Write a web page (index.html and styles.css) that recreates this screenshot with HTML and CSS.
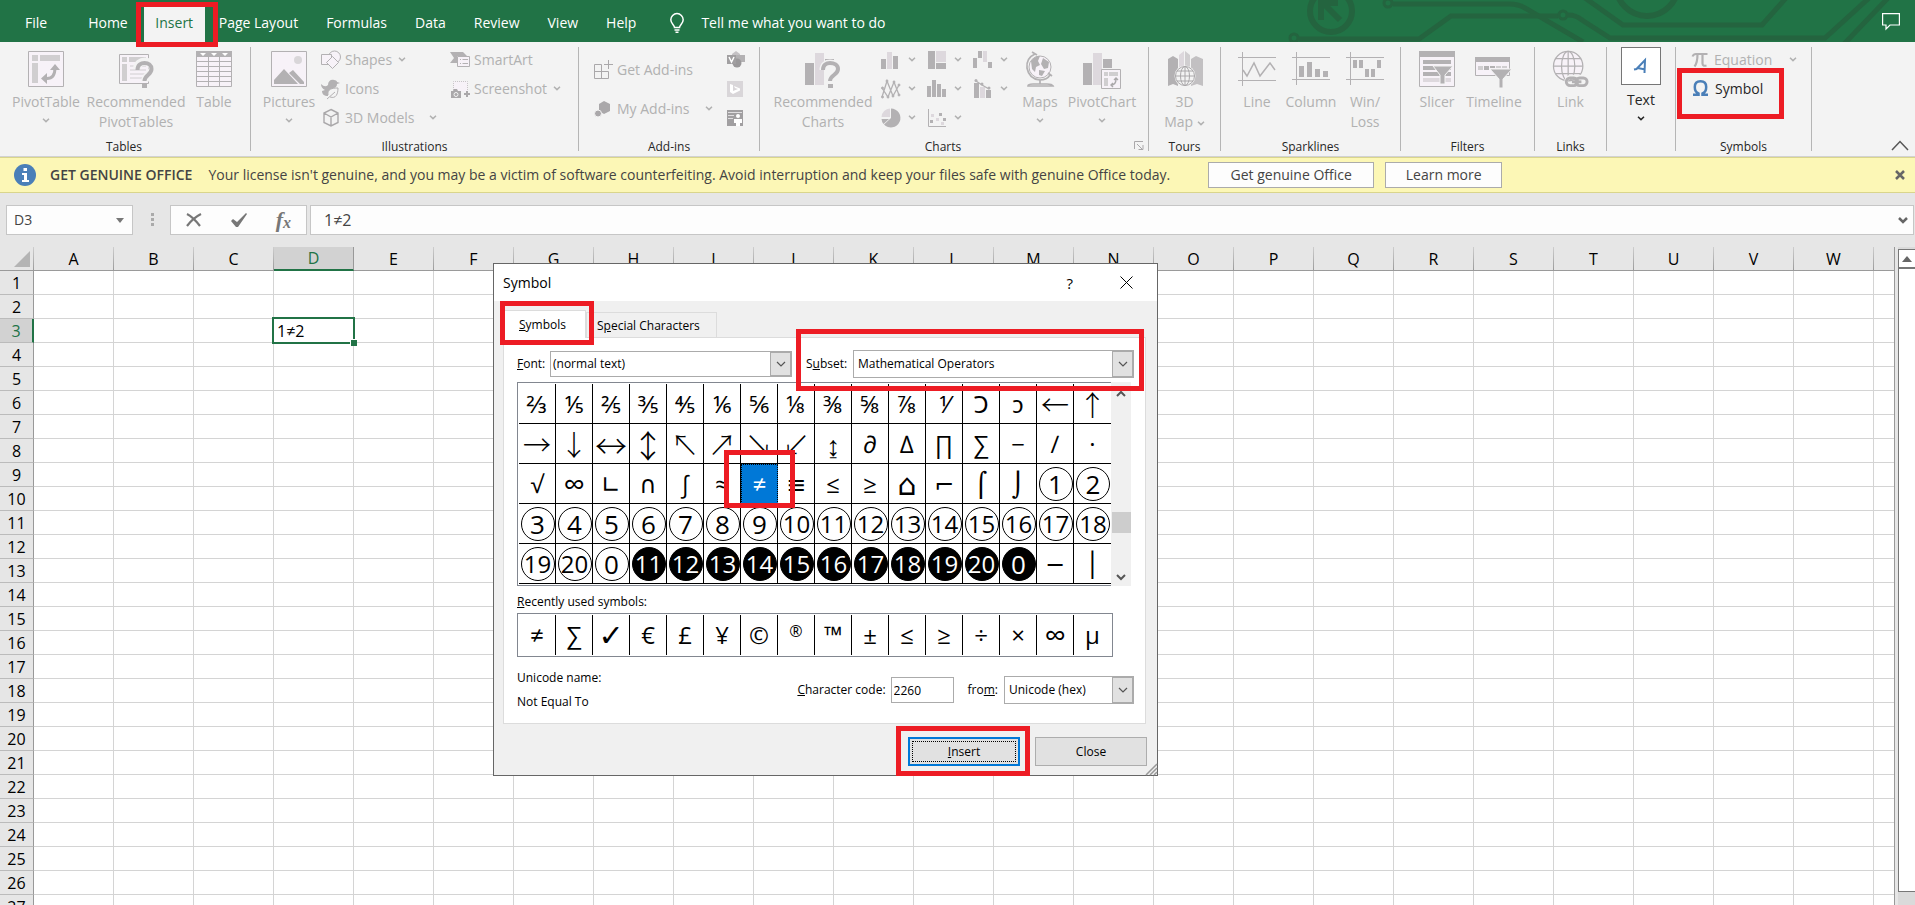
FILE: index.html
```html
<!DOCTYPE html>
<html lang="en">
<head>
<meta charset="utf-8">
<title>Excel – Symbol</title>
<link rel="stylesheet" href="styles.css">
</head>
<body>
<svg class="defs" aria-hidden="true">
  <symbol id="chev" viewBox="0 0 8 5"><path d="M1 .8 4 3.6 7 .8" fill="none" stroke="currentColor" stroke-width="1.5"/></symbol>
  <symbol id="drop" viewBox="0 0 10 6"><path d="M1 1 5 5 9 1" fill="none" stroke="#555" stroke-width="1.2"/></symbol>
</svg>

<header class="tabbar">
  <svg class="circuit" viewBox="1280 0 635 42" width="635" height="42" fill="none" stroke="#24643f" stroke-width="5" aria-hidden="true">
    <circle cx="1331" cy="11" r="21" stroke-width="6"/>
    <path d="M1340 20 1322 2M1321 20V3h17" stroke-width="6"/>
    <circle cx="1388" cy="3" r="4" stroke-width="3"/>
    <path d="M1393 4h117q8 0 15 4l58 34"/>
    <circle cx="1294" cy="38" r="4" stroke-width="3"/>
    <path d="M1299 39h120l32-23h107"/>
    <circle cx="1563" cy="15" r="4" stroke-width="3"/>
    <path d="M1568 15q8 0 14 5l28 18h215l44-40M1585-2l38 27h139l24-27M1888-2l-44 46"/>
    <circle cx="1647" cy="-15" r="31" stroke-width="6"/>
  </svg>
  <nav class="tabs">
    <button class="tab file">File</button>
    <button class="tab">Home</button>
    <span class="tabwrap"><button class="tab active">Insert</button><i class="mark mark-tab"></i></span>
    <button class="tab">Page Layout</button>
    <button class="tab">Formulas</button>
    <button class="tab">Data</button>
    <button class="tab">Review</button>
    <button class="tab">View</button>
    <button class="tab">Help</button>
    <button class="tab tell"><svg width="14" height="20" viewBox="0 0 14 20" fill="none" stroke="#fff" stroke-width="1.5"><path d="M4.500 14.500c0-2.500-3.700-4-3.700-7.700a6.200 6.200 0 0 1 12.400 0c0 3.700-3.700 5.200-3.700 7.700zM4.500 17h5M5.500 19.300h3"/></svg>Tell me what you want to do</button>
  </nav>
  <button class="comment" aria-label="Comments"><svg width="18" height="17" viewBox="0 0 18 17" fill="none" stroke="#fff" stroke-width="1.200"><path d="M.6.6h16.800v11.400H8L4 16v-4H.6z"/></svg></button>
</header>

<section class="ribbon">
  <div class="group g-tables">
    <div class="tools">
      <button class="big w76"><svg width="36" height="36" viewBox="0 0 36 36"><path d="M.5.5h35v35H.5z" fill="#f7f2f8" stroke="#b3b1b3"/><path d="M4 4h6v6H4zM12 4h20v6H12zM4 12h6v20H4z" fill="#d0ced0"/><path d="M15 27.500h4c6 0 8-4 8-11" fill="none" stroke="#b3b1b3" stroke-width="3"/><path d="m22 19 5-6 5 6zM19 22l-6 5.500 6 5.500z" fill="#b3b1b3"/></svg><span>PivotTable</span><svg class="chev"><use href="#chev"/></svg></button>
      <button class="big w104"><svg width="36" height="36" viewBox="0 0 36 36"><path d="M1.500 3.500h29v29h-29z" fill="#f7f2f8" stroke="#b3b1b3"/><path d="M4 6h5v5H4zM11 6h17v5H11zM4 13h5v17H4z" fill="#d0ced0"/><path d="M12 15h16M12 19h16M12 23h16M12 27h16" stroke="#d0ced0"/><path d="M19 18c0-5 4-7.500 8-7.500s7.500 2.500 7.500 7c0 6-7.500 6-7.500 13" fill="none" stroke="#f3f3f3" stroke-width="8"/><path d="M19.500 19c0-5 3.500-7 7-7 4 0 7 2 7 6 0 6-7 6-7 12" fill="none" stroke="#b3b1b3" stroke-width="4"/><path d="M24 33h5v4h-5z" fill="#b3b1b3"/></svg><span>Recommended<br>PivotTables</span></button>
      <button class="big w52"><svg width="36" height="36" viewBox="0 0 36 36"><path d="M.5.5h35v35H.5z" fill="#f7f2f8" stroke="#b3b1b3"/><path d="M0 0h36v6H0z" fill="#b3b1b3"/><path d="M4 2h6l-3 3zM15 2h6l-3 3zM26 2h6l-3 3z" fill="#fff"/><path d="M0 10.500h36M0 15.500h36M0 20.500h36M0 25.500h36M0 30.500h36M12.500 6v30M23.500 6v30" stroke="#b3b1b3"/></svg><span>Table</span></button>
    </div>
    <div class="gname">Tables</div>
  </div>
  <i class="sep"></i>
  <div class="group g-ill">
    <div class="tools">
      <button class="big w52"><svg width="36" height="36" viewBox="0 0 36 36"><path d="M.5.5h35v35H.5z" fill="#f7f2f8" stroke="#b3b1b3"/><circle cx="27" cy="9" r="4" fill="#d9d6d9"/><path d="M3 33v-4l10-11 14 15zM18 22l4-3 11 12v2h-4z" fill="#b3b1b3"/></svg><span>Pictures</span><svg class="chev"><use href="#chev"/></svg></button>
      <div class="stack s-shapes">
        <button class="small"><svg width="20" height="20" viewBox="0 0 20 20" fill="#f7f2f8" stroke="#b3b1b3"><circle cx="13.500" cy="7" r="6"/><path d="M.5 4.500h10v10H.5z"/><path d="m11.500 6.500 6 6-6 6-6-6z"/></svg><span>Shapes</span><svg class="chev"><use href="#chev"/></svg></button>
        <button class="small"><svg width="20" height="20" viewBox="0 0 20 20"><path d="M0 5q4 4 7 1c0-4 3-6 6-5 2 0 3 1 3 2l3 1-3 1q0 3-3 4c-5 1-6 5-6 8-4 0-6-2-6-5l3-1Q0 9 0 5z" fill="#b3b1b3"/><path d="M7 16c-1-6 4-7 10-7 0 6-2 11-8 9m-3 2 8-7" fill="#f3f3f3" stroke="#b3b1b3"/></svg><span>Icons</span></button>
        <button class="small"><svg width="20" height="20" viewBox="0 0 20 20" fill="none" stroke="#aaa8aa" stroke-width="1.400"><path d="m10 1.500 7 3.500v9.500l-7 3.500-7-3.500V5zM3 5l7 4 7-4M10 9v9"/></svg><span>3D Models</span><svg class="chev far"><use href="#chev"/></svg></button>
      </div>
      <div class="stack s-smart">
        <button class="small"><svg width="20" height="20" viewBox="0 0 20 20"><path d="M0 2h13l4 4H7v7H0l4-5z" fill="#b3b1b3"/><path d="M7.500 6.500h12v10h-12z" fill="#f7f2f8" stroke="#b3b1b3"/><path d="M10 9.500h1M12.500 9.500H18M10 13.500h1M12.500 13.500H18" stroke="#b3b1b3"/></svg><span>SmartArt</span></button>
        <button class="small"><svg width="20" height="20" viewBox="0 0 20 20"><path d="M3.500 11V2.500h14V13" fill="#f7f2f8" stroke="#c8c5c8" stroke-dasharray="1 1"/><path d="M1 12h2l1-2h3l1 2h3v7H1z" fill="#aaa8aa"/><circle cx="6" cy="15.500" r="2" fill="#aaa8aa" stroke="#f3f3f3"/><path d="M17 12v6M14 15h6" stroke="#aaa8aa" stroke-width="2"/></svg><span>Screenshot</span><svg class="chev"><use href="#chev"/></svg></button>
      </div>
    </div>
    <div class="gname">Illustrations</div>
  </div>
  <i class="sep"></i>
  <div class="group g-add">
    <div class="tools">
      <div class="stack s-add">
        <button class="small"><svg width="19" height="20" viewBox="0 0 19 20" fill="none" stroke="#aaa8aa"><path d="M7.500 4.500h-7v14h14v-7M.5 11.500h14M7.500 4.500v14M14.500 0v9M10 4.500h9"/></svg><span>Get Add-ins</span></button>
        <button class="small"><svg width="19" height="20" viewBox="0 0 19 20" fill="#aaa8aa"><path d="m10 2 6 3v7l-6 3-5-3V5z"/><circle cx="4" cy="14.500" r="3.500" stroke="#f3f3f3"/></svg><span>My Add-ins</span><svg class="chev far"><use href="#chev"/></svg></button>
      </div>
      <div class="stack s-ico">
        <button class="small" aria-label="Visio"><svg width="18" height="18" viewBox="0 0 18 18"><path d="M9 0 13 3v5H5V3z" fill="#c4c1c4"/><path d="M9 4h9v7H9z" fill="#b3b1b3"/><circle cx="10" cy="12" r="4.500" fill="#9a989a"/><path d="M0 4h9v9H0z" fill="#a19fa1"/><path d="m2 6 2.500 5L7 6" fill="none" stroke="#fff" stroke-width="1.500"/></svg></button>
        <button class="small" aria-label="Bing Maps"><svg width="16" height="16" viewBox="0 0 16 16"><path d="M0 0h16v16H0z" fill="#d9d6d9"/><path d="M3 3 6 4v6l5-2-3-1-1-2 6 2.500v2L6 13l-3-2z" fill="#fff"/></svg></button>
        <button class="small" aria-label="People Graph"><svg width="16" height="16" viewBox="0 0 16 16"><path d="M0 0h16v16H0z" fill="#a19fa1"/><path d="M1 2h14v1H1zM1 5h6v1H1zM1 8h5v1H1z" fill="#e0dee0"/><circle cx="11" cy="6" r="2" fill="#fff"/><path d="M7 9h8v4h-2v3H9v-3H7z" fill="#fff"/></svg></button>
      </div>
    </div>
    <div class="gname">Add-ins</div>
  </div>
  <i class="sep"></i>
  <div class="group g-charts">
    <div class="tools">
      <button class="big w104"><svg width="36" height="36" viewBox="0 0 36 36"><path d="M0 12h9v22H0zM20 8h9v6h-9z" fill="#b3b1b3"/><path d="M10 2h9v32h-9z" fill="#ddd8dd"/><path d="M18 19c0-5 3.500-7 7-7 4 0 7 2 7 6 0 6-7 6-7 12" fill="none" stroke="#f3f3f3" stroke-width="7"/><path d="M18 19c0-5 3.500-7 7-7 4 0 8 2 8 6 0 6-8 6-8 12" fill="none" stroke="#b3b1b3" stroke-width="4"/><path d="M23 33h5v4h-5z" fill="#b3b1b3"/></svg><span>Recommended<br>Charts</span></button>
      <div class="chartgrid">
      <div class="stack s-chart">
        <button class="small" aria-label="Column chart"><svg width="20" height="20" viewBox="0 0 20 20"><path d="M0 9h5v10H0zM12 6h5v13h-5z" fill="#b3b1b3"/><path d="M6 2h5v17H6z" fill="#ddd8dd"/></svg><svg class="chev"><use href="#chev"/></svg></button>
        <button class="small" aria-label="Line chart"><svg width="20" height="20" viewBox="0 0 20 20" fill="none" stroke="#b3b1b3"><path d="m1 18 5-16 6 15 6-11M1 9l6 9 6-15 5 13" stroke-width="1.300"/><g fill="#b3b1b3"><circle cx="1.500" cy="18" r="1"/><circle cx="6" cy="2" r="1"/><circle cx="12" cy="17" r="1"/><circle cx="18" cy="6" r="1"/><circle cx="1.500" cy="9" r="1"/><circle cx="7" cy="18" r="1"/><circle cx="13" cy="3" r="1"/><circle cx="18" cy="16" r="1"/></g></svg><svg class="chev"><use href="#chev"/></svg></button>
        <button class="small" aria-label="Pie chart"><svg width="20" height="20" viewBox="0 0 20 20"><path d="M10 .5a9.500 9.500 0 1 1-7 16L10 10z" fill="#b3b1b3"/><path d="M9 .5V9H.5A9 9 0 0 1 9 .5z" fill="#ddd8dd"/><path d="M.5 11H8l-5.500 5A9 9 0 0 1 .5 11z" fill="#b3b1b3"/></svg><svg class="chev"><use href="#chev"/></svg></button>
      </div>
      <div class="stack s-chart">
        <button class="small" aria-label="Hierarchy chart"><svg width="20" height="20" viewBox="0 0 20 20"><path d="M1 1h7v18H1zM9 13h10v6H9z" fill="#b3b1b3"/><path d="M9 1h10v11H9z" fill="#ddd8dd"/></svg><svg class="chev"><use href="#chev"/></svg></button>
        <button class="small" aria-label="Statistic chart"><svg width="20" height="20" viewBox="0 0 20 20"><path d="M0 7h4v11H0zM5 1h4v17H5zM10 5h4v13h-4zM15 10h4v8h-4z" fill="#b3b1b3"/></svg><svg class="chev"><use href="#chev"/></svg></button>
        <button class="small" aria-label="Scatter chart"><svg width="20" height="20" viewBox="0 0 20 20"><path d="M1.500 1v17.500H19" fill="none" stroke="#b3b1b3"/><path d="M3 12h3v3H3zM12 5h3v3h-3zM16 10h3v3h-3z" fill="#b3b1b3"/><path d="M4 6h3v3H4zM9 10h3v3H9zM14 14h3v3h-3z" fill="#ddd8dd"/></svg><svg class="chev"><use href="#chev"/></svg></button>
      </div>
      <div class="stack s-chart">
        <button class="small" aria-label="Waterfall chart"><svg width="20" height="20" viewBox="0 0 20 20"><path d="M0 8h4v10H0zM5 1h4v7H5zM15 12h4v6h-4z" fill="#b3b1b3"/><path d="M10 1h4v11h-4z" fill="#ddd8dd"/></svg><svg class="chev"><use href="#chev"/></svg></button>
        <button class="small" aria-label="Combo chart"><svg width="20" height="20" viewBox="0 0 20 20"><path d="M1 4h5v15H1zM13 11h5v8h-5z" fill="#b3b1b3"/><path d="M7 8h5v11H7z" fill="#ddd8dd"/><path d="m3 2 6 4 7 4" fill="none" stroke="#b3b1b3" stroke-width="1.300"/><circle cx="3" cy="1.500" r="1.500" fill="#b3b1b3"/><circle cx="9" cy="5" r="1.500" fill="#b3b1b3"/><circle cx="16" cy="9" r="1.500" fill="#b3b1b3"/></svg><svg class="chev"><use href="#chev"/></svg></button>
      </div>
      </div>
      <button class="big w52"><svg width="36" height="36" viewBox="0 0 36 36"><circle cx="18" cy="16" r="11" fill="#f7f2f8" stroke="#b3b1b3"/><path d="M9 10q4-5 9-5l-2 5 2 4-4 2-1 5-3-3zM21 7l6 4-1 6-4 1-3-5zM17 19l6 1-3 5-3-1z" fill="#b3b1b3"/><path d="M13 3Q4 7 5 17q2 11 13 12 7 0 10-5M10 1l5 3M26 22l4 3M18 29v4M6 35q0-2 5-2h14q5 0 6 2z" fill="none" stroke="#b3b1b3" stroke-width="1.700"/></svg><span>Maps</span><svg class="chev"><use href="#chev"/></svg></button>
      <button class="big w72"><svg width="38" height="36" viewBox="0 0 38 36"><path d="M0 12h9v22H0zM20 8h9v9h-9z" fill="#b3b1b3"/><path d="M10 2h9v32h-9z" fill="#ddd8dd"/><path d="M18.500 18.500h19v19h-19z" fill="#f7f2f8" stroke="#b3b1b3"/><path d="M21 21h4v4h-4zM26 21h9v4h-9zM21 27h4v8h-4z" fill="#d0ced0"/><path d="M28 34q5 0 5-6m-2 1 2-2 2 2m-5 3-2 2 2 2" fill="none" stroke="#aaa8aa" stroke-width="1.400"/></svg><span>PivotChart</span><svg class="chev"><use href="#chev"/></svg></button>
    </div>
    <div class="gname">Charts</div>
    <button class="launch" aria-label="Charts options"><svg width="10" height="9" viewBox="0 0 10 9" fill="none" stroke="#aaa8aa"><path d="M.5 8V.5H9M3 3l5 5M9 4v4.500H4.500"/></svg></button>
  </div>
  <i class="sep"></i>
  <div class="group g-tour">
    <div class="tools">
      <button class="big w52"><svg width="36" height="36" viewBox="0 0 36 36"><path d="m1 8 5-3 5 3v27l-5-2-5 2z" fill="#b3b1b3"/><path d="m12 4 5-4v32H12z" fill="#ddd8dd"/><path d="m18 0 5 4v28h-5z" fill="#d0ced0"/><path d="m24 8 5-3 7 3v27l-6-2-6 2z" fill="#c2c0c2"/><circle cx="18" cy="25" r="10.500" fill="#f3f3f3"/><g fill="none" stroke="#aaa8aa"><circle cx="18" cy="25" r="9.500"/><ellipse cx="18" cy="25" rx="4.500" ry="9.500"/><path d="M8 25h20M10 20h16M10 30h16M18 15v20"/></g></svg><span>3D<br>Map <svg class="chev"><use href="#chev"/></svg></span></button>
    </div>
    <div class="gname">Tours</div>
  </div>
  <i class="sep"></i>
  <div class="group g-spark">
    <div class="tools">
      <button class="big w54"><svg width="38" height="36" viewBox="0 0 38 36" fill="none" stroke="#b3b1b3"><path d="M0 6.500h38M0 29.500h38M4.500 1v34"/><path d="m5 19 4 6 7-13 6 13 10-13 5 7" stroke-width="1.500"/></svg><span>Line</span></button>
      <button class="big w54"><svg width="38" height="36" viewBox="0 0 38 36" fill="none" stroke="#b3b1b3"><path d="M0 6.500h38M0 28.500h38M4.500 1v33"/><path d="M7 15h5v11H7zM15 11h5v15h-5zM23 18h5v8h-5zM31 20h5v6h-5z" fill="#b3b1b3" stroke="none"/></svg><span>Column</span></button>
      <button class="big w54"><svg width="38" height="36" viewBox="0 0 38 36" fill="none" stroke="#b3b1b3"><path d="M0 6.500h38M0 28.500h38M4.500 1v33"/><path d="M7 9h4v8H7zM13 9h4v8h-4zM19 18h4v8h-4zM25 18h4v8h-4zM31 9h4v8h-4z" fill="#b3b1b3" stroke="none"/></svg><span>Win/<br>Loss</span></button>
    </div>
    <div class="gname">Sparklines</div>
  </div>
  <i class="sep"></i>
  <div class="group g-filt">
    <div class="tools">
      <button class="big w52"><svg width="36" height="36" viewBox="0 0 36 36"><path d="M.5.5h35v35H.5z" fill="#f7f2f8" stroke="#b3b1b3"/><path d="M0 0h36v6H0zM4 9h28v4H4zM4 15h28v4H4zM4 21h28v4H4z" fill="#b3b1b3"/><path d="M4 27h28v4H4z" fill="#ddd8dd"/><path d="M14 15h20l-8 9v9h-5v-9z" fill="#b3b1b3" stroke="#f3f3f3"/></svg><span>Slicer</span></button>
      <button class="big w62"><svg width="38" height="36" viewBox="0 0 38 36"><path d="M.5 6.500h34v18H.5z" fill="#f7f2f8" stroke="#b3b1b3"/><path d="M0 6h35v5H0z" fill="#b3b1b3"/><path d="M3 15h5v4H3z" fill="#d0ced0"/><path d="M9 15h5v4H9zM15 15h5v2h-5z" fill="#b3b1b3"/><path d="M21 15h5v2h-5zM27 15h5v2h-5z" fill="#d0ced0"/><path d="M15 18h22l-9 10v9h-4v-9z" fill="#b3b1b3" stroke="#f3f3f3"/></svg><span>Timeline</span></button>
    </div>
    <div class="gname">Filters</div>
  </div>
  <i class="sep"></i>
  <div class="group g-link">
    <div class="tools">
      <button class="big w52"><svg width="38" height="38" viewBox="0 0 38 38" fill="none" stroke="#b3b1b3" stroke-width="1.300"><circle cx="16" cy="16" r="15.500" fill="#f7f2f8"/><ellipse cx="16" cy="16" rx="7" ry="15.500"/><path d="M.5 16h31M3 8h26M3 24h26M16 .5v31"/><rect x="14" y="27" width="22" height="10" rx="5" stroke="#f3f3f3" stroke-width="4"/><rect x="14" y="28.500" width="12" height="8" rx="4" stroke-width="3"/><rect x="24" y="28.500" width="12" height="8" rx="4" stroke-width="3"/><path d="M20 32.500h10" stroke-width="3"/></svg><span>Link</span></button>
    </div>
    <div class="gname">Links</div>
  </div>
  <i class="sep"></i>
  <div class="group g-text">
    <div class="tools">
      <button class="big textbtn"><i class="abox"><svg width="16" height="18" viewBox="0 0 16 18" fill="none" stroke="#4a7fb8" stroke-width="2"><path d="m1 12.500 2.500-.5L12 3l-.5 13M4.500 11l8 1.500"/></svg></i><span>Text</span><svg class="chev"><use href="#chev"/></svg></button>
    </div>
  </div>
  <i class="sep"></i>
  <div class="group g-sym">
    <div class="tools">
      <div class="stack s-sym">
        <button class="small"><svg width="16" height="16" viewBox="0 0 16 16" fill="none" stroke="#b3b1b3"><path d="M.5 4.500Q1.500 2 4 2h11.500" stroke-width="2"/><path d="M5.500 2q0 9-3 12.500M10.500 2v9.500q0 3 4 2" stroke-width="2.200"/></svg><span>Equation</span><svg class="chev far"><use href="#chev"/></svg></button>
        <span class="symwrap"><button class="small on"><svg width="17" height="17" viewBox="0 0 17 17" fill="none" stroke="#4a7fb8"><path d="M1 14.800h5.500v-1.300C4 12.500 2.800 10 2.800 7c0-3.500 2.200-5.700 5.700-5.700s5.700 2.200 5.700 5.700c0 3-1.200 5.500-3.700 6.500v1.300H16" stroke-width="2.500"/></svg><span>Symbol</span></button><i class="mark mark-sym"></i></span>
      </div>
    </div>
    <div class="gname">Symbols</div>
  </div>
  <i class="sep"></i>
  <button class="collapse" aria-label="Collapse the ribbon"><svg width="18" height="11" viewBox="0 0 18 11" fill="none" stroke="#555" stroke-width="1.500"><path d="m1 10 8-8.500 8 8.500"/></svg></button>
</section>

<section class="notice">
  <svg width="22" height="22" viewBox="0 0 22 22"><circle cx="11" cy="11" r="11" fill="#4a7fb8"/><path d="M9.500 4h3.500v3H9.500zM8 9h5v7h2v2H8v-2h2v-5H8z" fill="#fff"/></svg>
  <strong>GET GENUINE OFFICE</strong>
  <span class="msg">Your license isn't genuine, and you may be a victim of software counterfeiting. Avoid interruption and keep your files safe with genuine Office today.</span>
  <button class="nbtn get">Get genuine Office</button>
  <button class="nbtn">Learn more</button>
  <button class="nclose" aria-label="Close message"><svg width="10" height="10" viewBox="0 0 10 10" stroke="#666" stroke-width="2.500"><path d="m1 1 8 8M9 1 1 9"/></svg></button>
</section>

<section class="formula">
  <div class="namebox"><input aria-label="Name box" value="D3"><svg width="8" height="5" viewBox="0 0 8 5"><path d="M0 0h8L4 5z" fill="#777"/></svg></div>
  <svg class="dots" width="4" height="14" viewBox="0 0 4 14" fill="#aaa"><path d="M0 0h3v3H0zM0 5h3v3H0zM0 10h3v3H0z"/></svg>
  <div class="fbtns">
    <button aria-label="Cancel"><svg width="16" height="14" viewBox="0 0 16 14" stroke="#777" stroke-width="2.200" fill="none"><path d="M1 1q6 3 13 12M15 1Q7 5 1 13"/></svg></button>
    <button aria-label="Enter"><svg width="18" height="14" viewBox="0 0 18 14"><path d="m1 8 2-2 4 3 9-9 1 1L8 14H6z" fill="#777"/></svg></button>
    <button class="fx" aria-label="Insert function"><i>f</i><i class="x">x</i></button>
  </div>
  <div class="fbox"><input aria-label="Formula bar" value="1≠2"><svg width="10" height="7" viewBox="0 0 10 7"><path d="m1 1 4 4 4-4" fill="none" stroke="#666" stroke-width="2.500"/></svg></div>
</section>

<main class="work">
  <div class="sheetwrap"><table class="sheet" id="sheet"></table></div>
  <div class="vscroll">
    <button aria-label="Scroll up"><svg width="10" height="6" viewBox="0 0 10 6"><path d="m0 6 5-6 5 6z" fill="#666"/></svg></button>
    <div class="vthumb"></div>
  </div>
</main>

<section class="dialog" role="dialog" aria-labelledby="dtitle">
  <div class="dtitle"><h1 id="dtitle">Symbol</h1><button class="help">?</button><button aria-label="Close"><svg width="13" height="13" viewBox="0 0 13 13" stroke="#000"><path d="m.5.5 12 12M12.500.5l-12 12"/></svg></button></div>
  <div class="dbody">
    <div class="dtabs" role="tablist">
      <button role="tab" aria-selected="true" class="dtab cur"><span><u>S</u>ymbols</span></button>
      <button role="tab" class="dtab"><span>S<u>p</u>ecial Characters</span></button>
      <i class="mark mark-dtab"></i>
    </div>
    <div class="panel">
      <div class="frow">
        <label for="font"><u>F</u>ont:</label>
        <div class="combo c-font"><select id="font"><option>(normal text)</option></select><i><svg width="10" height="6"><use href="#drop"/></svg></i></div>
        <label for="subset" class="l-sub">S<u>u</u>bset:</label>
        <div class="combo c-sub"><select id="subset"><option>Mathematical Operators</option></select><i><svg width="10" height="6"><use href="#drop"/></svg></i></div>
        <b class="mark mark-sub"></b>
      </div>
      <div class="symarea">
        <div class="symgrid" id="symbols"></div>
        <div class="sscroll"><svg width="10" height="7" viewBox="0 0 10 7" fill="none" stroke="#555" stroke-width="2"><path d="m1 6 4-4 4 4"/></svg><i></i><svg width="10" height="7" viewBox="0 0 10 7" fill="none" stroke="#555" stroke-width="2"><path d="m1 1 4 4 4-4"/></svg></div>
      </div>
      <p class="rlabel"><u>R</u>ecently used symbols:</p>
      <div class="recent" id="recent"></div>
      <div class="urow">
        <p>Unicode name:<br>Not Equal To</p>
        <div class="code">
          <label for="code"><u>C</u>haracter code:</label><input id="code" value="2260">
          <label for="from" class="l-from">fro<u>m</u>:</label>
          <div class="combo c-from"><select id="from"><option>Unicode (hex)</option></select><i><svg width="10" height="6"><use href="#drop"/></svg></i></div>
        </div>
      </div>
    </div>
    <div class="dbtns">
      <span class="inswrap"><button class="dbtn primary"><span><u>I</u>nsert</span></button><i class="mark mark-ins"></i></span>
      <button class="dbtn">Close</button>
    </div>
  </div>
  <svg class="grip" width="11" height="11" viewBox="0 0 11 11" stroke="#999" stroke-width="1.500"><path d="M0 11 11 0M4 11l7-7M8 11l3-3"/></svg>
</section>
<script src="script.js"></script>
</body>
</html>
```
FILE: script.js
```js
const sheet = document.getElementById('sheet');
const letters = 'ABCDEFGHIJKLMNOPQRSTUVW'.split('');
let html = '<colgroup><col class="rowcol">' + letters.map(() => '<col class="datacol">').join('') + '<col></colgroup>';
html += '<thead><tr><th class="corner"><svg width="16" height="16" viewBox="0 0 16 16"><path d="M16 0v16H0z" fill="#b4b4b4"/></svg></th>';
html += letters.map(l => `<th${l === 'D' ? ' class="sel"' : ''}>${l}</th>`).join('') + '<th class="end"></th></tr></thead><tbody>';
for (let r = 1; r <= 27; r++) {
  html += `<tr><th${r === 3 ? ' class="sel"' : ''}>${r}</th>`;
  for (const l of letters) {
    html += r === 3 && l === 'D' ? '<td class="cell">1≠2<i class="cursor"></i></td>' : '<td></td>';
  }
  html += '<td class="end"></td></tr>';
}
sheet.innerHTML = html + '</tbody>';

const rows = [
  '⅔⅕⅖⅗⅘⅙⅚⅛⅜⅝⅞⅟Ↄↄ←↑',
  '→↓↔↕↖↗↘↙↨∂∆∏∑−∕·',
  '√∞∟∩∫≈≠≡≤≥⌂⌐⌠⌡①②',
  '③④⑤⑥⑦⑧⑨⑩⑪⑫⑬⑭⑮⑯⑰⑱',
  '⑲⑳⓪⓫⓬⓭⓮⓯⓰⓱⓲⓳⓴⓿─│'
];
const ringed = c => {
  const p = c.codePointAt(0);
  if (p >= 0x2460 && p <= 0x2473) return ['ring', p - 0x2460 + 1];
  if (p === 0x24ea) return ['ring', 0];
  if (p >= 0x24eb && p <= 0x24f4) return ['ring solid', p - 0x24eb + 11];
  if (p === 0x24ff) return ['ring solid', 0];
  return null;
};
const kind = c => {
  if ('↔↕'.includes(c)) return ' arrow long';
  if ('←↑→↓↖↗↘↙↨'.includes(c)) return ' arrow';
  if ('∞⌂✓'.includes(c)) return ' large';
  return c === '®' ? ' reg' : '';
};
document.getElementById('symbols').innerHTML = rows.flatMap(r => [...r]).map(c => {
  const n = ringed(c);
  if (n) return `<button class="sym" title="${c}"><span class="${n[0]}${n[1] > 9 ? ' two' : ''}">${n[1]}</span></button>`;
  if (c === '≠') return '<span class="picked"><button class="sym chosen">≠</button><i class="mark mark-ne"></i></span>';
  return `<button class="sym${kind(c)}">${c}</button>`;
}).join('');
document.getElementById('recent').innerHTML = [...'≠∑✓€£¥©®™±≤≥÷×∞µ'].map(c => `<button class="sym${kind(c)}">${c}</button>`).join('');
```
FILE: styles.css
```css
* { box-sizing: border-box; }
body { margin: 0; height: 100vh; display: flex; flex-direction: column; overflow: hidden; position: relative; background: #e6e6e6; color: #262626; font: 14px/20px "Open Sans", "Noto Sans", "DejaVu Sans", sans-serif; }
button, input, select { font: inherit; color: inherit; border: 0; background: none; padding: 0; margin: 0; border-radius: 0; outline: 0; }
svg { display: block; flex: none; overflow: visible; }
.defs { position: absolute; width: 0; height: 0; }
.mark { position: absolute; border: 5px solid #ed1c24; pointer-events: none; z-index: 3; }

.tabbar { position: relative; z-index: 2; display: flex; height: 42px; background: #217346; color: #fff; flex: none; justify-content: space-between; }
.circuit { position: absolute; right: 0; top: 0; clip-path: inset(0); }
.tabs { display: flex; padding-top: 7px; }
.tab { height: 35px; padding: 0 14px 3px; white-space: nowrap; }
.file { padding: 0 27px 3px 25px; }
.tabwrap { position: relative; margin-left: 2px; }
.active { background: #f3f3f3; color: #217346; width: 61px; padding: 0 0 3px; }
.mark-tab { left: -8px; right: -13px; top: -5px; bottom: -5px; }
.tell { display: flex; align-items: center; gap: 17px; margin-left: 6px; }
.comment { position: relative; padding: 0 15px 0 0; display: flex; align-items: center; }

.ribbon { display: flex; flex: none; height: 115px; padding-top: 4px; background: #f3f3f3; border-bottom: 1px solid #d2d2d2; color: #b1b1b1; position: relative; }
.sep { width: 1px; height: 104px; margin-top: 1px; background: #b5b5b5; flex: none; }
.group { display: flex; flex-direction: column; position: relative; flex: none; }
.tools { display: flex; height: 90px; flex: none; }
.gname { color: #262626; font-size: 12px; text-align: center; line-height: 20px; padding-top: 1px; flex: none; }
.g-tables { width: 250px; padding-left: 8px; } .g-tables .gname { padding-right: 10px; }
.g-ill { width: 327px; } .g-ill .tools { padding-left: 12px; }
.g-add { width: 180px; } .g-add .tools { padding-left: 15px; }
.g-charts { width: 388px; } .g-charts .tools { padding-left: 11px; } .g-charts .gname { padding-right: 22px; }
.g-tour { width: 71px; } .g-tour .tools { justify-content: center; }
.g-spark { width: 179px; } .g-spark .tools { padding-left: 9px; }
.g-filt { width: 133px; } .g-filt .tools { padding-left: 10px; }
.g-link { width: 71px; } .g-link .tools { justify-content: center; }
.g-text { width: 68px; } .g-text .tools { justify-content: center; }
.g-sym { width: 135px; } .g-sym .tools { padding-left: 16px; }
.big { display: flex; flex-direction: column; align-items: center; padding-top: 5px; white-space: nowrap; flex: none; }
.big > span { margin-top: 5px; }
.big > svg:first-child { height: 36px; }
.w52 { width: 52px; } .w54 { width: 54px; } .w62 { width: 62px; } .w72 { width: 72px; } .w76 { width: 76px; } .w104 { width: 104px; }
.chev { width: 8px; height: 5px; }
.big > .chev { margin-top: 6px; }
.big span .chev { display: inline-block; vertical-align: middle; }
.stack { display: flex; flex-direction: column; flex: none; }
.small { display: flex; align-items: center; gap: 4px; height: 29px; padding-bottom: 2px; white-space: nowrap; }
.small .chev { margin-left: 2px; }
.small .far { margin-left: 11px; }
.s-shapes { width: 135px; padding-left: 6px; }
.s-add { width: 133px; padding-top: 10px; gap: 10px; }
.chartgrid { display: flex; padding-left: 6px; margin-right: -5px; }
.s-chart { width: 46px; }
.s-chart .small { gap: 5px; }
.s-sym .small { gap: 6px; }
.s-sym { width: 110px; }
.symwrap { position: relative; }
.on { color: #262626; }
.mark-sym { left: -15px; top: -7px; width: 107px; height: 51px; }
.launch { position: absolute; right: 4px; bottom: 6px; }
.textbtn { color: #262626; padding-top: 1px; }
.abox { display: grid; place-items: center; width: 40px; height: 38px; background: #fff; border: 1px solid #767676; }
.collapse { margin: auto 6px 5px auto; }

.notice { display: flex; flex: none; align-items: center; height: 36px; padding: 0 10px 0 14px; background: #fcf7b6; border: solid #d9d58c; border-width: 1px 0; color: #444; white-space: nowrap; }
.notice strong { margin: 0 16px 0 14px; font-weight: 600; }
.nbtn { height: 26px; border: 1px solid #ababab; background: #fdfdfd; width: 117px; }
.nbtn.get { width: 166px; margin: 0 11px 0 38px; }
.nclose { margin-left: auto; }

.formula { display: flex; flex: none; height: 54px; padding: 12px 1px 12px 6px; color: #444; }
.namebox, .fbtns, .fbox { display: flex; align-items: center; background: #fdfdfd; border: 1px solid #c6c6c6; }
.namebox { width: 127px; padding: 0 8px 0 7px; }
.formula input { flex: 1; min-width: 0; }
.dots { margin: 8px 15px 0 18px; }
.fbtns { width: 137px; justify-content: space-between; padding: 0 15px; margin-right: 3px; }
.fx { font: italic bold 22px/24px "Liberation Serif", serif; color: #777; display: flex; align-items: center; }
.fx .x { font-size: 16px; padding-top: 6px; }
.fbox { flex: 1; padding: 0 5px 0 13px; }
.fbox input { font-size: 16px; }

.work { flex: 1; min-height: 0; display: flex; gap: 3px; }
.sheetwrap { flex: 1; min-width: 0; overflow: hidden; border-right: 1px solid #999; }
.sheet { width: 100%; table-layout: fixed; border-collapse: separate; border-spacing: 0; background: #fff; color: #000; font-size: 16px; }
.rowcol { width: 34px; } .datacol { width: 80px; }
.sheet th { height: 24px; padding: 0; font-weight: 400; line-height: 22px; background: #e6e6e6; }
.sheet thead th { border-bottom: 1px solid #999; border-right: 1px solid; border-image: linear-gradient(#d0d0d0, #999) 1; }
.sheet thead th.end { border-right: 0; }
.sheet thead .sel { background: #d2d2d2; color: #217346; border-image: none; border-color: #999; border-bottom: 2px solid #217346; line-height: 21px; }
.corner svg { margin-left: 14px; }
.sheet tbody th { border-right: 1px solid #999; border-bottom: 1px solid #bbb; }
.sheet tbody .sel { background: #d2d2d2; color: #217346; border-right: 2px solid #217346; }
.sheet td { height: 24px; padding: 0; border: solid #d4d4d4; border-width: 0 1px 1px 0; line-height: 22px; }
.sheet td.end { border-right: 0; }
.sheet .cell { position: relative; padding: 1px 0 0 3px; }
.cursor { position: absolute; inset: -2px -2px -2px -2px; border: 2px solid #217346; }
.cursor::after { content: ""; position: absolute; right: -4px; bottom: -4px; width: 6px; height: 6px; background: #217346; border: solid #fff; border-width: 1px 0 0 1px; }
.vscroll { width: 17px; padding-top: 2px; display: flex; flex-direction: column; background: #dadada; }
.vscroll button { height: 19px; border: solid #777; border-width: 1px 0 1px 1px; background: #fff; display: grid; place-items: center; flex: none; }
.vthumb { flex: 1; margin-bottom: 13px; border: solid #777; border-width: 1px 0 1px 1px; background: #fff; }

.dialog { position: absolute; left: 493px; top: 263px; width: 665px; border: 1px solid #666; background: #f0f0f0; color: #000; font-size: 12px; z-index: 2; }
.dtitle { display: flex; align-items: center; height: 37px; padding: 0 24px 0 9px; background: #fff; }
.dtitle h1 { margin: 0 auto 0 0; font-size: 14px; font-weight: 400; }
.help { font-size: 15px; margin-right: 47px; }
.dbody { padding: 9px 10px 9px 9px; }
.dtabs { display: flex; align-items: flex-end; height: 27px; position: relative; }
.dtab { height: 25px; width: 131px; border: 1px solid #dcdcdc; border-bottom: 0; white-space: nowrap; text-align: left; padding: 2px 0 0 10px; }
.dtab.cur { height: 28px; width: 83px; background: #fff; position: relative; margin-bottom: -1px; padding: 0 0 0 15px; }
.mark-dtab { left: -3px; top: -9px; width: 94px; height: 44px; }
.panel { border: 1px solid #dcdcdc; background: #fff; padding: 12px 11px 9px 13px; margin-right: 1px; }
.frow { display: flex; align-items: center; height: 28px; position: relative; margin-bottom: 4px; }
.frow label { width: 33px; flex: none; }
.frow .l-sub { width: 47px; margin-left: 14px; }
.combo { display: flex; height: 28px; border: 1px solid #ababab; background: #fff; }
.combo select { flex: 1; min-width: 0; appearance: none; padding: 0 4px; }
.combo i { width: 21px; border: 1px solid #ababab; background: #e1e1e1; display: grid; place-items: center; flex: none; }
.c-font { width: 242px; height: 26px; } .c-font select { padding: 0 2px; }
.c-sub { flex: 1; } .c-from { width: 130px; }
.mark-sub { left: 279px; right: -10px; top: -21px; height: 62px; }
.symarea { display: flex; height: 204px; }
.symgrid { display: grid; grid-template-columns: repeat(16, 37px); grid-auto-rows: 40px; border: solid #828790; border-width: 1px 0 1px 1px; padding: 1px 0 1px 1px; }
.sym { width: 100%; height: 100%; display: grid; place-content: center; overflow: hidden; min-width: 0; border-right: 1px solid #000; border-bottom: 1px solid #000; font-size: 24px; line-height: 30px; color: #000; }
.arrow { font-family: "Noto Sans CJK JP", sans-serif; font-size: 28px; font-weight: 300; }
.long { font-size: 32px; }
.large { font-size: 30px; }
.reg { font-size: 16px; padding-bottom: 8px; }
.symgrid > :nth-child(16n), .recent > :last-child { border-right: 0; }
.ring { display: block; width: 34px; height: 34px; margin-left: 1px; border: 1px solid #000; border-radius: 50%; font-size: 26px; line-height: 32px; text-align: center; }
.two { font-size: 24px; }
.solid { background: #000; color: #fff; }
.picked { position: relative; display: block; }
.chosen { background: #0078d7; color: #fff; border: 1px dotted #000; }
.mark-ne { left: -17px; top: -14px; width: 71px; height: 58px; }
.sscroll { width: 20px; background: #f0f0f0; display: flex; flex-direction: column; align-items: center; padding: 8px 0 5px; justify-content: space-between; }
.sscroll i { width: 19px; height: 21px; background: #cdcdcd; margin-top: 74px; }
.rlabel { margin: 6px 0 1px; line-height: 20px; }
.recent { display: grid; grid-template-columns: repeat(16, 37px); width: 596px; height: 44px; border: 1px solid #828790; padding: 1px; }
.recent .sym { border-bottom: 0; }
.urow { display: flex; justify-content: space-between; align-items: center; margin-top: 9px; }
.urow p { margin: 0; line-height: 24px; }
.code { display: flex; align-items: center; }
.code input { width: 63px; height: 26px; border: 1px solid #ababab; margin: 0 14px 0 5px; padding: 0 2px; }
.l-from { margin-right: 6px; }
.dbtns { display: flex; justify-content: flex-end; gap: 15px; margin-top: 13px; }
.dbtn { width: 112px; height: 29px; background: #e1e1e1; border: 1px solid #adadad; }
.inswrap { position: relative; }
.primary { border: 2px solid #0078d7; padding: 2px; display: grid; }
.primary span { border: 1px dotted #000; display: grid; place-content: center; grid-auto-flow: column; height: 21px; }
.mark-ins { left: -12px; right: -10px; top: -11px; bottom: -10px; }
.grip { position: absolute; right: 0; bottom: 0; }
```
